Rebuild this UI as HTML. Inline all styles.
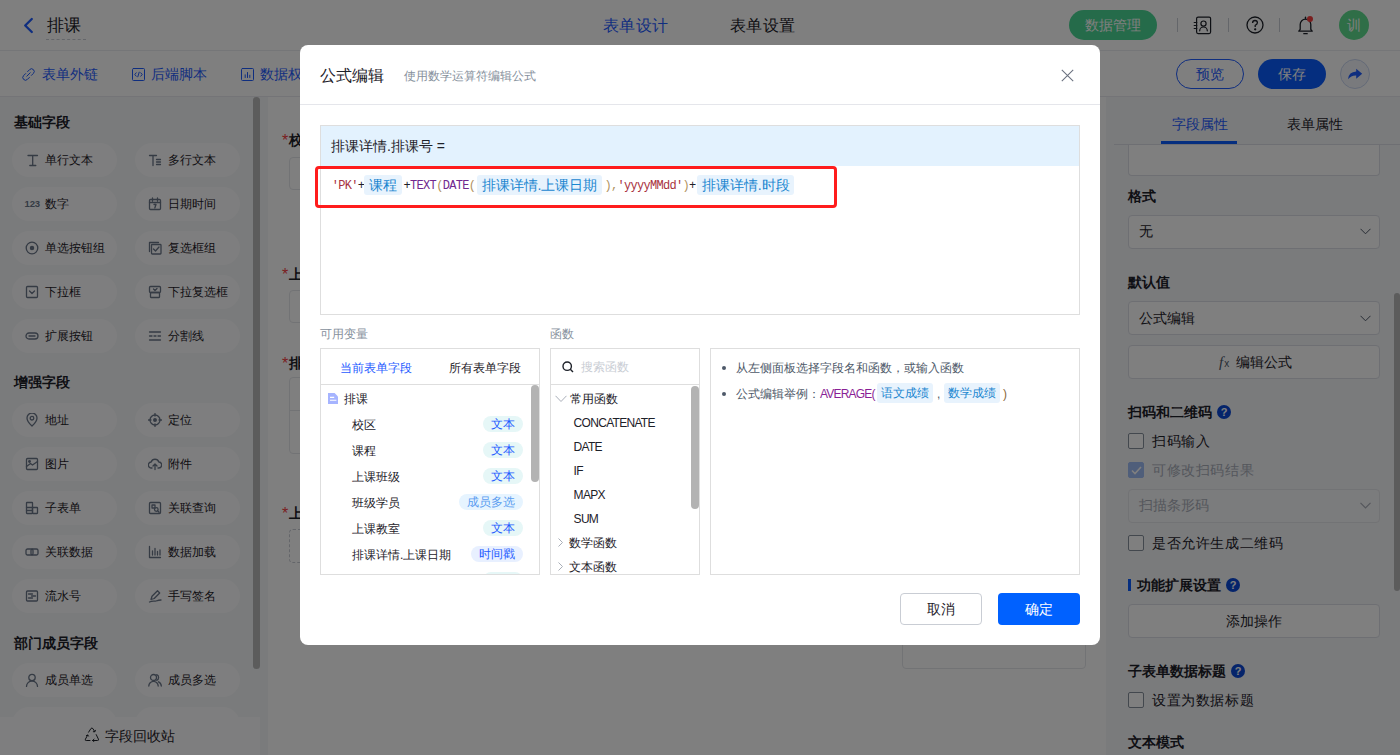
<!DOCTYPE html>
<html><head><meta charset="utf-8">
<style>
*{box-sizing:border-box;margin:0;padding:0}
html,body{width:1400px;height:755px;overflow:hidden;background:#fff}
body{font-family:"Liberation Sans",sans-serif;font-size:14px;color:#1d2129;position:relative}
.a{position:absolute;white-space:nowrap}
.ic{position:absolute}
/* header */
#hdr{position:absolute;left:0;top:0;width:1400px;height:51px;background:#fff;border-bottom:1px solid #ebedf0}
#tb{position:absolute;left:0;top:51px;width:1400px;height:46px;background:#fff;border-bottom:1px solid #e8e9ee}
#lp{position:absolute;left:0;top:97px;width:268px;height:658px;background:#f4f6f9}
.pill{position:absolute;width:105px;height:34px;border-radius:17px;background:#fdfdfe;font-size:12px;line-height:34px;color:#1d2129}
.pill span{position:absolute;left:33px;top:0}
.pill svg{position:absolute;left:13px;top:10px}
.sec{position:absolute;left:14px;font-size:14px;font-weight:bold;line-height:20px;color:#1d2129}
#cv{position:absolute;left:268px;top:97px;width:838px;height:658px;background:#fff}
#rp{position:absolute;left:1106px;top:97px;width:294px;height:658px;background:#f4f6f9}
.inp{position:absolute;left:1128px;width:252px;border:1px solid #dcdfe6;border-radius:4px;background:#fff}
.lbl{position:absolute;left:1128px;font-size:14px;font-weight:bold;line-height:20px}
.cb{position:absolute;left:1128px;width:16px;height:16px;border:1px solid #86909c;border-radius:2px;background:#fff}
.q{position:absolute;width:14px;height:14px;border-radius:7px;background:#0a49d6;color:#fff;font-size:11px;font-weight:bold;line-height:14px;text-align:center}
#mask{position:absolute;left:0;top:0;width:1400px;height:755px;background:rgba(0,0,0,.5)}
/* modal */
#md{position:absolute;left:300px;top:45px;width:800px;height:600px;background:#fff;border-radius:8px}
.box{position:absolute;border:1px solid #dedede;background:#fff}
.lat{letter-spacing:-.7px}
.tag{position:absolute;height:16px;border-radius:8px;font-size:12px;line-height:16px;text-align:center}
.t1{background:#e6f7f7;color:#1f5cff}
.fn{position:absolute;font-size:12px;line-height:16px;color:#1d2129}
.code{font-family:"Liberation Mono",monospace;font-size:12px;letter-spacing:-.7px;line-height:16px;color:#1d2129}
.code i{font-style:normal}.code .s{color:#a8323e}.code .k{color:#70288f}.code .b{color:#b0925f}
.chip{display:inline-block;background:#e8f3fd;color:#1a86d0;border-radius:3px;font-family:"Liberation Sans",sans-serif}
</style></head><body>

<!-- ============ HEADER ============ -->
<div id="hdr">
  <svg class="ic" style="left:22px;top:17px" width="12" height="17" viewBox="0 0 12 17"><path d="M9.8 2 L3.2 8.5 L9.8 15" fill="none" stroke="#1f5cff" stroke-width="2.3" stroke-linecap="round" stroke-linejoin="round"/></svg>
  <div class="a" style="left:47px;top:15px;font-size:17px;line-height:22px;color:#1d2129">排课</div>
  <div class="a" style="left:46px;top:39px;width:40px;border-top:1px dashed #c9cdd4"></div>
  <div class="a" style="left:603px;top:15px;font-size:16px;line-height:22px;letter-spacing:.3px;color:#1f5cff">表单设计</div>
  <div class="a" style="left:730px;top:15px;font-size:16px;line-height:22px;letter-spacing:.3px;color:#1d2129">表单设置</div>
  <div class="a" style="left:1069px;top:10px;width:88px;height:30px;border-radius:15px;background:#4ad694;color:#fff;font-size:14px;line-height:30px;text-align:center">数据管理</div>
  <div class="a" style="left:1177px;top:18px;width:1px;height:14px;background:#c9cdd4"></div>
  <div class="a" style="left:1228px;top:18px;width:1px;height:14px;background:#c9cdd4"></div>
  <div class="a" style="left:1279px;top:18px;width:1px;height:14px;background:#c9cdd4"></div>
  <svg class="ic" style="left:1193px;top:16px" width="19" height="19" viewBox="0 0 19 19" fill="none" stroke="#1d2129" stroke-width="1.2" stroke-linecap="round"><rect x="3.6" y="1.1" width="14" height="16.5" rx="1.5"/><circle cx="10.5" cy="7.6" r="2.6"/><path d="M6.7 14.8 A3.8 3.8 0 0 1 14.3 14.8"/><path d="M1.2 6.5h2.6M1.2 9.5h2.6M1.2 12.5h2.6"/></svg>
  <svg class="ic" style="left:1246px;top:16px" width="18" height="18" viewBox="0 0 18 18" fill="none" stroke="#1d2129" stroke-width="1.3"><circle cx="9" cy="9" r="8"/><path d="M6.6 7 Q6.6 4.5 9 4.5 Q11.4 4.5 11.4 6.8 Q11.4 8.3 9.2 9.3 L9.2 11"/><circle cx="9.2" cy="13.3" r=".5" fill="#1d2129"/></svg>
  <svg class="ic" style="left:1297px;top:16px" width="17" height="19" viewBox="0 0 17 19" fill="none" stroke="#1d2129" stroke-width="1.3" stroke-linejoin="round" stroke-linecap="round"><path d="M1.8 15.2 H15.2 L13.8 13.4 V8.5 A5.3 5.3 0 0 0 3.2 8.5 V13.4 Z"/><path d="M6.8 17.7h3.4"/><path d="M8.5 1.2v1.6"/></svg>
  <div class="a" style="left:1307px;top:16px;width:6px;height:6px;border-radius:3px;background:#f53f3f"></div>
  <div class="a" style="left:1339px;top:10px;width:30px;height:30px;border-radius:15px;background:#5edc8e;color:#fff;font-size:14px;line-height:30px;text-align:center">训</div>
</div>

<!-- ============ TOOLBAR ============ -->
<div id="tb">
  <svg class="ic" style="left:22px;top:17px" width="13" height="13" viewBox="0 0 13 13" fill="none" stroke="#1f5cff" stroke-width="1" stroke-linecap="round"><path d="M5.6 3.6 L7.6 1.6 A2.3 2.3 0 0 1 11.4 5.4 L9.4 7.4"/><path d="M7.4 9.4 L5.4 11.4 A2.3 2.3 0 0 1 1.6 7.6 L3.6 5.6"/><path d="M4.8 8.2 L8.2 4.8"/></svg>
  <div class="a" style="left:42px;top:13px;font-size:14px;line-height:20px;color:#1f5cff">表单外链</div>
  <svg class="ic" style="left:132px;top:17px" width="13" height="13" viewBox="0 0 13 13" fill="none" stroke="#1f5cff" stroke-width="1" stroke-linecap="round" stroke-linejoin="round"><rect x=".5" y=".5" width="12" height="12" rx="1"/><path d="M4.2 4.8 L2.8 6.5 L4.2 8.2 M8.8 4.8 L10.2 6.5 L8.8 8.2 M7.2 4.2 L5.8 8.8"/></svg>
  <div class="a" style="left:151px;top:13px;font-size:14px;line-height:20px;color:#1f5cff">后端脚本</div>
  <svg class="ic" style="left:241px;top:17px" width="13" height="13" viewBox="0 0 13 13" fill="none" stroke="#1f5cff" stroke-width="1" stroke-linecap="round"><rect x=".5" y=".5" width="12" height="12" rx="1"/><path d="M4.2 9.5V6.8M6.5 9.5V4.5M8.8 9.5V7.2"/></svg>
  <div class="a" style="left:260px;top:13px;font-size:14px;line-height:20px;color:#1f5cff">数据权限</div>
  <div class="a" style="left:1176px;top:8px;width:68px;height:30px;border-radius:15px;border:1px solid #1f5cff;color:#1f5cff;font-size:14px;line-height:28px;text-align:center">预览</div>
  <div class="a" style="left:1258px;top:8px;width:68px;height:30px;border-radius:15px;background:#0a5cff;color:#fff;font-size:14px;line-height:30px;text-align:center">保存</div>
  <div class="a" style="left:1340px;top:8px;width:30px;height:30px;border-radius:15px;border:1px solid #c9d5ef;background:#f2f5fb"></div>
  <svg class="ic" style="left:1347px;top:16px" width="16" height="14" viewBox="0 0 16 14"><path d="M1 12.2 Q1.8 5 9.2 4.6 V1.8 L15.2 6.8 L9.2 11.8 V8.4 Q4 8.2 1 12.2 Z" fill="#1f5cff"/></svg>
</div>

<!-- ============ LEFT PANEL ============ -->
<div id="lp">
  <div class="sec" style="top:15px">基础字段</div>
  <div class="pill" style="left:12px;top:46px"><svg width="14" height="14" viewBox="0 0 14 14" fill="none" stroke="#6a7689" stroke-width="1.3" stroke-linecap="round" stroke-linejoin="round"><path d="M3 2.5h9.5M7.7 2.5v10M4.8 12.5h6"/></svg><span>单行文本</span></div>
  <div class="pill" style="left:135px;top:46px"><svg width="14" height="14" viewBox="0 0 14 14" fill="none" stroke="#6a7689" stroke-width="1.3" stroke-linecap="round" stroke-linejoin="round"><path d="M1.5 2.5h7M5 2.5v10M8.5 6.5h4M8.5 9h4M8.5 11.5h4"/></svg><span>多行文本</span></div>
  <div class="pill" style="left:12px;top:90px"><b style="position:absolute;left:12.5px;top:0;font-size:9.5px;letter-spacing:-.1px;color:#6a7689;font-family:'Liberation Sans',sans-serif">123</b><span>数字</span></div>
  <div class="pill" style="left:135px;top:90px"><svg width="14" height="14" viewBox="0 0 14 14" fill="none" stroke="#6a7689" stroke-width="1.3" stroke-linecap="round" stroke-linejoin="round"><rect x="1.5" y="2.5" width="11" height="10" rx="1"/><path d="M1.5 5.5h11M4.5 1v3M9.5 1v3M6 7.5h2l-1.2 3.5"/></svg><span>日期时间</span></div>
  <div class="pill" style="left:12px;top:134px"><svg width="14" height="14" viewBox="0 0 14 14" fill="none" stroke="#6a7689" stroke-width="1.3" stroke-linecap="round" stroke-linejoin="round"><circle cx="7" cy="7" r="5.8"/><circle cx="7" cy="7" r="1.6" fill="#6a7689"/></svg><span>单选按钮组</span></div>
  <div class="pill" style="left:135px;top:134px"><svg width="14" height="14" viewBox="0 0 14 14" fill="none" stroke="#6a7689" stroke-width="1.3" stroke-linecap="round" stroke-linejoin="round"><path d="M1.5 10.5V1.5h9"/><rect x="3.5" y="3.5" width="9.5" height="9.5" rx=".8"/><path d="M5.5 8l2 2 3.5-4"/></svg><span>复选框组</span></div>
  <div class="pill" style="left:12px;top:178px"><svg width="14" height="14" viewBox="0 0 14 14" fill="none" stroke="#6a7689" stroke-width="1.3" stroke-linecap="round" stroke-linejoin="round"><rect x="1.5" y="1.5" width="11" height="11" rx="1"/><path d="M4.5 6l2.5 2.5L9.5 6"/></svg><span>下拉框</span></div>
  <div class="pill" style="left:135px;top:178px"><svg width="14" height="14" viewBox="0 0 14 14" fill="none" stroke="#6a7689" stroke-width="1.3" stroke-linecap="round" stroke-linejoin="round"><rect x="1.5" y="1.5" width="11" height="6" rx="1"/><rect x="2.5" y="7.5" width="9" height="5" rx=".5"/><path d="M5.5 4l1.5 1.5 2-2"/></svg><span>下拉复选框</span></div>
  <div class="pill" style="left:12px;top:222px"><svg width="14" height="14" viewBox="0 0 14 14" fill="none" stroke="#6a7689" stroke-width="1.3" stroke-linecap="round" stroke-linejoin="round"><rect x="1" y="4" width="12" height="6" rx="3"/><path d="M4 7h6"/></svg><span>扩展按钮</span></div>
  <div class="pill" style="left:135px;top:222px"><svg width="14" height="14" viewBox="0 0 14 14" fill="none" stroke="#6a7689" stroke-width="1.3" stroke-linecap="round" stroke-linejoin="round"><path d="M1.5 3h11M1.5 11h11M1.5 7h2.5M6 7h2M10 7h2.5"/></svg><span>分割线</span></div>
  <div class="sec" style="top:275px">增强字段</div>
  <div class="pill" style="left:12px;top:306px"><svg width="14" height="14" viewBox="0 0 14 14" fill="none" stroke="#6a7689" stroke-width="1.3" stroke-linecap="round" stroke-linejoin="round"><path d="M7 13s-5-4.5-5-8a5 5 0 0 1 10 0c0 3.5-5 8-5 8z"/><circle cx="7" cy="5.2" r="1.8"/></svg><span>地址</span></div>
  <div class="pill" style="left:135px;top:306px"><svg width="14" height="14" viewBox="0 0 14 14" fill="none" stroke="#6a7689" stroke-width="1.3" stroke-linecap="round" stroke-linejoin="round"><circle cx="7" cy="7" r="5"/><circle cx="7" cy="7" r="1.3" fill="#6a7689"/><path d="M7 .5v2.5M7 11v2.5M.5 7h2.5M11 7h2.5"/></svg><span>定位</span></div>
  <div class="pill" style="left:12px;top:350px"><svg width="14" height="14" viewBox="0 0 14 14" fill="none" stroke="#6a7689" stroke-width="1.3" stroke-linecap="round" stroke-linejoin="round"><rect x="1.5" y="1.5" width="11" height="11" rx="1"/><path d="M1.5 9.5l4-3 2 1.5 5-3.5"/><circle cx="4.5" cy="4.5" r=".8" fill="#6a7689"/></svg><span>图片</span></div>
  <div class="pill" style="left:135px;top:350px"><svg width="14" height="14" viewBox="0 0 14 14" fill="none" stroke="#6a7689" stroke-width="1.3" stroke-linecap="round" stroke-linejoin="round"><path d="M4 11H3.5a3 3 0 0 1-.3-6 4 4 0 0 1 7.6 0 3 3 0 0 1-.3 6H10M7 12.5V7M5 9l2-2 2 2"/></svg><span>附件</span></div>
  <div class="pill" style="left:12px;top:394px"><svg width="14" height="14" viewBox="0 0 14 14" fill="none" stroke="#6a7689" stroke-width="1.3" stroke-linecap="round" stroke-linejoin="round"><rect x="1.5" y="1.5" width="6" height="11" rx=".5"/><rect x="7.5" y="6.5" width="5" height="6" rx=".5"/><path d="M1.5 6.5h6M1.5 9.5h6"/></svg><span>子表单</span></div>
  <div class="pill" style="left:135px;top:394px"><svg width="14" height="14" viewBox="0 0 14 14" fill="none" stroke="#6a7689" stroke-width="1.3" stroke-linecap="round" stroke-linejoin="round"><rect x="1.5" y="1.5" width="11" height="11" rx="1"/><rect x="4" y="4" width="3" height="3"/><circle cx="8.3" cy="8.5" r="1.8"/><path d="M9.6 9.8l1.5 1.5"/></svg><span>关联查询</span></div>
  <div class="pill" style="left:12px;top:438px"><svg width="14" height="14" viewBox="0 0 14 14" fill="none" stroke="#6a7689" stroke-width="1.3" stroke-linecap="round" stroke-linejoin="round"><rect x="1" y="4" width="7" height="6" rx="1.5"/><rect x="6" y="4" width="7" height="6" rx="1.5"/></svg><span>关联数据</span></div>
  <div class="pill" style="left:135px;top:438px"><svg width="14" height="14" viewBox="0 0 14 14" fill="none" stroke="#6a7689" stroke-width="1.3" stroke-linecap="round" stroke-linejoin="round"><path d="M1.5 1.5v11h11M4.5 10V6M7 10V3.5M9.5 10V6.5M12 10V5"/></svg><span>数据加载</span></div>
  <div class="pill" style="left:12px;top:482px"><svg width="14" height="14" viewBox="0 0 14 14" fill="none" stroke="#6a7689" stroke-width="1.3" stroke-linecap="round" stroke-linejoin="round"><rect x="1.5" y="2" width="11" height="10" rx="1"/><path d="M3.5 5h4M6.5 7h4M3.5 9h4"/></svg><span>流水号</span></div>
  <div class="pill" style="left:135px;top:482px"><svg width="14" height="14" viewBox="0 0 14 14" fill="none" stroke="#6a7689" stroke-width="1.3" stroke-linecap="round" stroke-linejoin="round"><path d="M3 10.5l1-3.2 5.5-5.5 2.2 2.2-5.5 5.5-3.2 1M1.5 13c3-1.5 5-.5 6.5-1s3-1 5-1"/></svg><span>手写签名</span></div>
  <div class="sec" style="top:536px">部门成员字段</div>
  <div class="pill" style="left:12px;top:566px"><svg width="14" height="14" viewBox="0 0 14 14" fill="none" stroke="#6a7689" stroke-width="1.3" stroke-linecap="round" stroke-linejoin="round"><circle cx="7" cy="4.5" r="3.2"/><path d="M1.5 13.5a5.5 5.5 0 0 1 11 0"/></svg><span>成员单选</span></div>
  <div class="pill" style="left:135px;top:566px"><svg width="14" height="14" viewBox="0 0 14 14" fill="none" stroke="#6a7689" stroke-width="1.3" stroke-linecap="round" stroke-linejoin="round"><circle cx="5.5" cy="4.5" r="3"/><path d="M.8 13a4.7 4.7 0 0 1 9.4 0M8.7 1.7a3 3 0 0 1 0 5.6M10.5 8.8a4.7 4.7 0 0 1 2.8 4.2"/></svg><span>成员多选</span></div>
  <div class="pill" style="left:12px;top:610px"></div>
  <div class="pill" style="left:135px;top:610px"></div>
  <div class="a" style="left:253px;top:0;width:7px;height:572px;border-radius:4px;background:#b8b8b8"></div>
  <div class="a" style="left:0;top:620px;width:260px;height:38px;background:#fdfdfe;font-size:14px;line-height:38px;text-align:center;color:#1d2129"><svg style="position:absolute;left:84px;top:10px" width="16" height="15" viewBox="0 0 16 15" fill="none" stroke="#1d2129" stroke-width="1" stroke-linecap="round" stroke-linejoin="round"><path d="M6 13.5H2.2Q.7 13.5 1.4 12.2L3.6 8.2"/><path d="M2.4 8.6L3.7 7.9L4.5 9.1"/><path d="M4.6 5.2L6.9 1.6Q7.9 .4 8.9 1.6L10.7 4.6"/><path d="M9.3 4.7L10.8 4.8L11.4 3.3"/><path d="M12.2 7.6L14.4 12.1Q15 13.5 13.5 13.5H8.6"/><path d="M10 12.2L8.5 13.5L10 14.6"/></svg><span style="position:absolute;left:105px;top:0">字段回收站</span></div>
</div>

<!-- ============ CANVAS ============ -->
<div id="cv"></div>
<div class="a" style="left:282px;top:130px;font-size:14px;line-height:20px;font-weight:bold;color:#1d2129"><i style="font-style:normal;color:#f53f3f;font-weight:normal;font-size:16px;position:relative;top:1px;margin-right:1px">*</i>校区</div>
<div class="a" style="left:289px;top:157px;width:797px;height:33px;border:1px solid #e5e6eb;border-radius:4px"></div>
<div class="a" style="left:282px;top:264px;font-size:14px;line-height:20px;font-weight:bold;color:#1d2129"><i style="font-style:normal;color:#f53f3f;font-weight:normal;font-size:16px;position:relative;top:1px;margin-right:1px">*</i>上课班级</div>
<div class="a" style="left:289px;top:290px;width:797px;height:33px;border:1px solid #e5e6eb;border-radius:4px"></div>
<div class="a" style="left:282px;top:353px;font-size:14px;line-height:20px;font-weight:bold;color:#1d2129"><i style="font-style:normal;color:#f53f3f;font-weight:normal;font-size:16px;position:relative;top:1px;margin-right:1px">*</i>排课详情</div>
<div class="a" style="left:289px;top:377px;width:797px;height:77px;border:1px solid #e5e6eb;border-radius:4px"></div>
<div class="a" style="left:289px;top:410px;width:797px;height:1px;background:#e5e6eb"></div>
<div class="a" style="left:282px;top:503px;font-size:14px;line-height:20px;font-weight:bold;color:#1d2129"><i style="font-style:normal;color:#f53f3f;font-weight:normal;font-size:16px;position:relative;top:1px;margin-right:1px">*</i>上课日期</div>
<div class="a" style="left:289px;top:529px;width:797px;height:34px;border:1px dashed #c9cdd4;border-radius:4px"></div>
<div class="a" style="left:902px;top:600px;width:184px;height:69px;border:1px solid #e5e6eb;border-radius:4px"></div>


<!-- ============ RIGHT PANEL ============ -->
<div id="rp"></div>
<div class="inp" style="top:135px;height:41px;border-top:none;border-radius:0 0 4px 4px"></div>
<div class="a" style="left:1106px;top:97px;width:294px;height:47px;background:#f4f6f9"></div>
<div class="a" style="left:1114px;top:144px;width:286px;height:1px;background:#dcdfe6"></div>
<div class="a" style="left:1172px;top:114px;font-size:14px;line-height:20px;color:#1f5cff">字段属性</div>
<div class="a" style="left:1287px;top:114px;font-size:14px;line-height:20px;color:#1d2129">表单属性</div>
<div class="a" style="left:1161px;top:141px;width:76px;height:3px;background:#0a5cff"></div>
<div class="lbl" style="top:186px">格式</div>
<div class="inp" style="top:215px;height:34px"><div class="a" style="left:10px;top:5px;font-size:14px;line-height:20px">无</div><svg class="ic" style="left:231px;top:12px" width="11" height="7" viewBox="0 0 11 7" fill="none" stroke="#4e5969" stroke-width="1"><path d="M.5 .8 L5.5 5.8 L10.5 .8"/></svg></div>
<div class="lbl" style="top:272px">默认值</div>
<div class="inp" style="top:301px;height:34px"><div class="a" style="left:10px;top:6px;font-size:14px;line-height:20px">公式编辑</div><svg class="ic" style="left:231px;top:13px" width="11" height="7" viewBox="0 0 11 7" fill="none" stroke="#4e5969" stroke-width="1"><path d="M.5 .8 L5.5 5.8 L10.5 .8"/></svg></div>
<div class="inp" style="top:345px;height:34px"><div class="a" style="left:90px;top:6px;font-size:15px;line-height:20px;font-style:italic;font-family:'Liberation Serif',serif;color:#4e5969">f<span style="font-size:10px;font-style:normal;font-family:'Liberation Sans',sans-serif;margin-left:1px">x</span></div><div class="a" style="left:107px;top:6px;font-size:14px;line-height:20px">编辑公式</div></div>
<div class="lbl" style="top:402px">扫码和二维码</div>
<div class="q" style="left:1217px;top:405px">?</div>
<div class="cb" style="top:433px"></div>
<div class="a" style="left:1152px;top:431px;font-size:14px;line-height:20px;letter-spacing:.6px">扫码输入</div>
<div class="cb" style="top:462px;background:#9fbcf5;border-color:#9fbcf5"><svg class="ic" style="left:2px;top:3px" width="11" height="9" viewBox="0 0 11 9" fill="none" stroke="#fff" stroke-width="1.6"><path d="M1 4.5 L4 7.5 L10 1"/></svg></div>
<div class="a" style="left:1152px;top:460px;font-size:14px;line-height:20px;letter-spacing:.6px;color:#a9aeb8">可修改扫码结果</div>
<div class="inp" style="top:489px;height:34px;background:#f7f8fa;border-color:#e5e6eb"><div class="a" style="left:10px;top:5px;font-size:14px;line-height:20px;color:#a9aeb8">扫描条形码</div><svg class="ic" style="left:231px;top:12px" width="11" height="7" viewBox="0 0 11 7" fill="none" stroke="#a9aeb8" stroke-width="1.2"><path d="M.5 .8 L5.5 5.8 L10.5 .8"/></svg></div>
<div class="cb" style="top:535px"></div>
<div class="a" style="left:1152px;top:533px;font-size:14px;line-height:20px;letter-spacing:.6px">是否允许生成二维码</div>
<div class="a" style="left:1128px;top:579px;width:3px;height:12px;background:#0a5cff"></div>
<div class="lbl" style="left:1137px;top:575px">功能扩展设置</div>
<div class="q" style="left:1226px;top:578px">?</div>
<div class="inp" style="top:604px;height:34px;text-align:center;font-size:14px;line-height:32px">添加操作</div>
<div class="lbl" style="top:661px">子表单数据标题</div>
<div class="q" style="left:1231px;top:664px">?</div>
<div class="cb" style="top:692px"></div>
<div class="a" style="left:1152px;top:690px;font-size:14px;line-height:20px;letter-spacing:.6px">设置为数据标题</div>
<div class="lbl" style="top:732px">文本模式</div>
<div class="a" style="left:1394px;top:293px;width:6px;height:298px;border-radius:3px;background:#b8b8b8"></div>


<div id="mask"></div>

<!-- ============ MODAL ============ -->
<div id="md">
  <div class="a" style="left:20px;top:20px;font-size:16px;line-height:22px;color:#1d2129">公式编辑</div>
  <div class="a" style="left:104px;top:23px;font-size:12px;line-height:17px;color:#86909c">使用数学运算符编辑公式</div>
  <svg class="ic" style="left:761px;top:24px" width="13" height="13" viewBox="0 0 13 13" fill="none" stroke="#6b7280" stroke-width="1.1"><path d="M.8 .8 L12.2 12.2 M12.2 .8 L.8 12.2"/></svg>
  <div class="a" style="left:0;top:59px;width:800px;height:1px;background:#e5e6eb"></div>

  <div class="box" style="left:20px;top:80px;width:760px;height:190px"></div>
  <div class="a" style="left:21px;top:81px;width:758px;height:40px;background:#e3f2fe"></div>
  <div class="a" style="left:31px;top:91px;font-size:14px;line-height:20px;color:#1d2129">排课详情.排课号 =</div>

  <div class="a" style="left:15px;top:121px;width:522px;height:42px;border:3px solid #ff1c1c;border-radius:4px"></div>
  <div class="a code" style="left:31.8px;top:133px"><i class="s">'PK'</i>+</div>
  <div class="a chip" style="left:64px;top:130px;width:38px;height:20px;font-size:14px;line-height:20px;text-align:center">课程</div>
  <div class="a code" style="left:103.6px;top:133px">+<i class="k">TEXT</i><i class="b">(</i><i class="k">DATE</i><i class="b">(</i></div>
  <div class="a chip" style="left:177px;top:130px;width:125px;height:20px;font-size:14px;line-height:20px;text-align:center">排课详情.上课日期</div>
  <div class="a code" style="left:304.5px;top:133px"><i class="b">)</i><i class="b">,</i><i class="s">'yyyyMMdd'</i><i class="b">)</i>+</div>
  <div class="a chip" style="left:397.3px;top:130px;width:97px;height:20px;font-size:14px;line-height:20px;text-align:center">排课详情.时段</div>

  <div class="a" style="left:20px;top:281px;font-size:12px;line-height:17px;color:#86909c">可用变量</div>
  <div class="a" style="left:250px;top:281px;font-size:12px;line-height:17px;color:#86909c">函数</div>

  <!-- variables -->
  <div class="box" style="left:20px;top:303px;width:220px;height:227px;overflow:hidden">
    <div class="a" style="left:0;top:35px;width:218px;height:1px;background:#dedede"></div>
    <div class="a" style="left:19px;top:11px;font-size:12px;line-height:17px;color:#1f5cff">当前表单字段</div>
    <div class="a" style="left:128px;top:11px;font-size:12px;line-height:17px;color:#1d2129">所有表单字段</div>
    <svg class="ic" style="left:7px;top:44px" width="10" height="11" viewBox="0 0 10 11"><path d="M0 0 H6.6 L10 3.4 V11 H0 Z" fill="#a6b4ff"/><path d="M2 4.4 H6.2 M2 7.3 H8.4" stroke="#fff" stroke-width="1.1"/></svg>
    <div class="fn" style="left:23px;top:42px">排课</div>
    <div class="fn" style="left:31px;top:68px">校区</div>
    <div class="fn" style="left:31px;top:94px">课程</div>
    <div class="fn" style="left:31px;top:120px">上课班级</div>
    <div class="fn" style="left:31px;top:146px">班级学员</div>
    <div class="fn" style="left:31px;top:172px">上课教室</div>
    <div class="fn" style="left:31px;top:198px">排课详情.上课日期</div>
    <div class="tag t1" style="left:162px;top:67px;width:40px">文本</div>
    <div class="tag t1" style="left:162px;top:93px;width:40px">文本</div>
    <div class="tag t1" style="left:162px;top:119px;width:40px">文本</div>
    <div class="tag" style="left:138px;top:145px;width:64px;background:#e6f4ff;color:#5a9cf0">成员多选</div>
    <div class="tag t1" style="left:162px;top:171px;width:40px">文本</div>
    <div class="tag" style="left:150px;top:197px;width:52px;background:#e8f0ff;color:#1f5cff">时间戳</div>
    <div class="tag t1" style="left:162px;top:223px;width:40px">文本</div>
    <div class="a" style="left:210px;top:36px;width:8px;height:97px;border-radius:4px;background:#b3b3b3"></div>
  </div>

  <!-- functions -->
  <div class="box" style="left:250px;top:303px;width:150px;height:227px;overflow:hidden">
    <div class="a" style="left:0;top:35px;width:148px;height:1px;background:#dedede"></div>
    <svg class="ic" style="left:11px;top:12px" width="12" height="12" viewBox="0 0 12 12" fill="none" stroke="#1d2129" stroke-width="1.4"><circle cx="5.2" cy="5.2" r="4.2"/><path d="M8.3 8.3 L11 11"/></svg>
    <div class="a" style="left:30px;top:10px;font-size:12px;line-height:17px;color:#c9cdd4">搜索函数</div>
    <svg class="ic" style="left:4px;top:46px" width="12" height="8" viewBox="0 0 12 8" fill="none" stroke="#a9aeb8" stroke-width="1"><path d="M.5 .8 L6 6.5 L11.5 .8"/></svg>
    <div class="fn" style="left:18.6px;top:42px">常用函数</div>
    <div class="fn" style="left:22.6px;top:66px"><span class="lat">CONCATENATE</span></div>
    <div class="fn" style="left:22.6px;top:90px"><span class="lat">DATE</span></div>
    <div class="fn" style="left:22.6px;top:114px"><span class="lat">IF</span></div>
    <div class="fn" style="left:22.6px;top:138px"><span class="lat">MAPX</span></div>
    <div class="fn" style="left:22.6px;top:162px"><span class="lat">SUM</span></div>
    <svg class="ic" style="left:7px;top:189px" width="5" height="9" viewBox="0 0 5 9" fill="none" stroke="#a9aeb8" stroke-width="1"><path d="M.5 .5 L4.5 4.5 L.5 8.5"/></svg>
    <div class="fn" style="left:18px;top:186px">数学函数</div>
    <svg class="ic" style="left:7px;top:213px" width="5" height="9" viewBox="0 0 5 9" fill="none" stroke="#a9aeb8" stroke-width="1"><path d="M.5 .5 L4.5 4.5 L.5 8.5"/></svg>
    <div class="fn" style="left:18px;top:210px">文本函数</div>
    <div class="a" style="left:140px;top:37px;width:8px;height:123px;border-radius:4px;background:#b3b3b3"></div>
  </div>

  <!-- description -->
  <div class="box" style="left:410px;top:303px;width:370px;height:227px">
    <div class="a" style="left:11px;top:17px;width:4px;height:4px;border-radius:2px;background:#4e5969"></div>
    <div class="a" style="left:25px;top:11px;font-size:12px;line-height:17px;color:#4e5969">从左侧面板选择字段名和函数，或输入函数</div>
    <div class="a" style="left:11px;top:43px;width:4px;height:4px;border-radius:2px;background:#4e5969"></div>
    <div class="a" style="left:25px;top:37px;font-size:12px;line-height:17px;color:#4e5969">公式编辑举例：</div>
    <div class="a" style="left:109px;top:37px;font-size:12px;line-height:17px;color:#8a1f96;letter-spacing:-.8px">AVERAGE(</div>
    <div class="a chip" style="left:166px;top:34px;width:56px;height:20px;font-size:12px;line-height:20px;text-align:center">语文成绩</div>
    <div class="a" style="left:226px;top:37px;font-size:12px;line-height:17px;color:#4e5969">,</div>
    <div class="a chip" style="left:233px;top:34px;width:56px;height:20px;font-size:12px;line-height:20px;text-align:center">数学成绩</div>
    <div class="a" style="left:292px;top:37px;font-size:12px;line-height:17px;color:#8a6a3a">)</div>
  </div>

  <div class="a" style="left:600px;top:548px;width:82px;height:32px;border:1px solid #c9cdd4;border-radius:4px;background:#fff;font-size:14px;line-height:30px;text-align:center;color:#1d2129">取消</div>
  <div class="a" style="left:698px;top:548px;width:82px;height:32px;border-radius:4px;background:#0061ff;font-size:14px;line-height:32px;text-align:center;color:#fff;font-weight:500">确定</div>
</div>

</body></html>
